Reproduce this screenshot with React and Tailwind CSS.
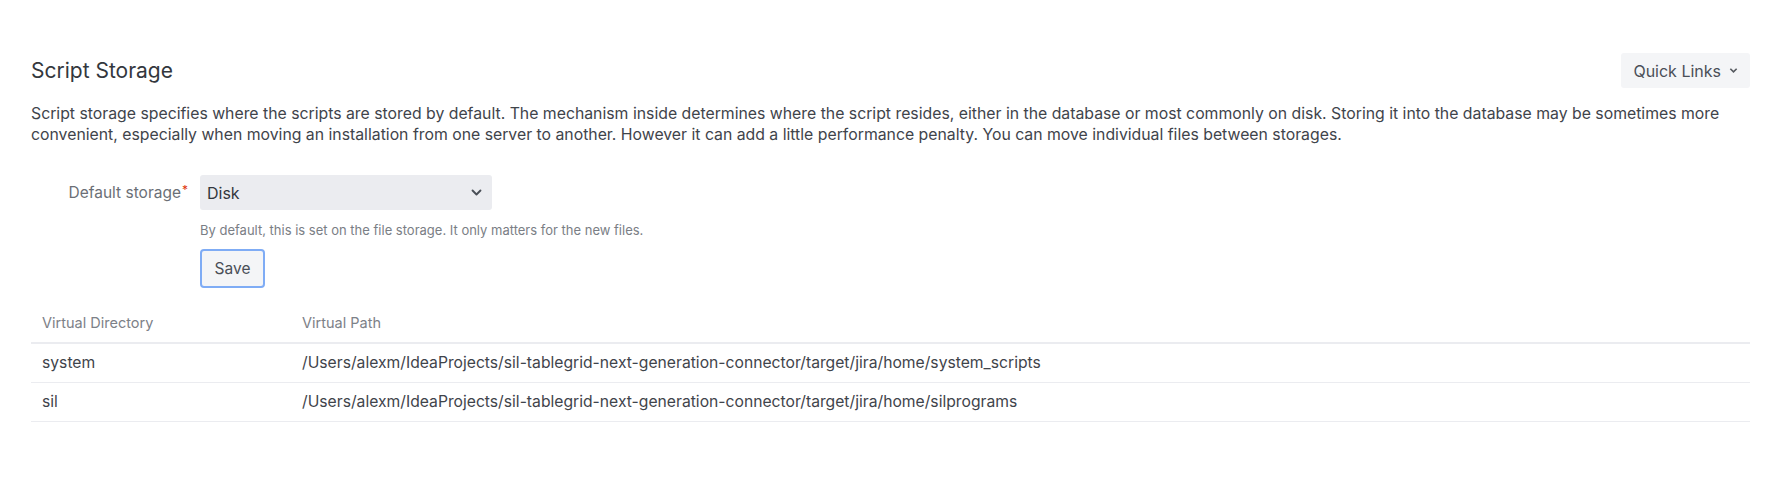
import React from "react";

const rows = [
  {
    dir: "system",
    path: "/Users/alexm/IdeaProjects/sil-tablegrid-next-generation-connector/target/jira/home/system_scripts",
  },
  {
    dir: "sil",
    path: "/Users/alexm/IdeaProjects/sil-tablegrid-next-generation-connector/target/jira/home/silprograms",
  },
];

const Chevron = ({ className }) => (
  <svg viewBox="0 0 24 24" className={className} fill="none">
    <path
      d="M7 9.5l5 5 5-5"
      stroke="currentColor"
      strokeWidth="2.4"
      strokeLinecap="round"
      strokeLinejoin="round"
    />
  </svg>
);

const App = () => {
  return (
    <div className="min-h-[478px] bg-white font-['Inter','Liberation_Sans',sans-serif] text-[#3a3f47] pt-[53px] pl-[31px] pr-[32px]">
      {/* header */}
      <div className="flex items-center justify-between h-[35px]">
        <h1 className="text-[21px] leading-none text-[#33373d]">Script Storage</h1>
        <button className="flex items-center h-[35px] pl-[12px] pr-[12px] bg-[#F4F5F7] rounded-[3px] text-[16px] text-[#4a4f57]">
          Quick Links
          <svg viewBox="0 0 10 10" className="w-[9px] h-[9px] ml-[8px]">
            <path d="M1.5 3l3.5 3.5L8.5 3" fill="none" stroke="#55595f" strokeWidth="1.8" />
          </svg>
        </button>
      </div>

      <p className="mt-[15px] text-[15.8px] leading-[21px] text-[#3f444b]">
        Script storage specifies where the scripts are stored by default. The mechanism inside
        determines where the script resides, either in the database or most commonly on disk.
        Storing it into the database may be sometimes more convenient, especially when moving an
        installation from one server to another. However it can add a little performance penalty.
        You can move individual files between storages.
      </p>

      {/* form */}
      <div className="mt-[30px] flex">
        <div className="w-[169px] shrink-0 pr-[12px] h-[35px] flex items-center justify-end text-[15.5px] text-[#6b6f76]">
          Default storage<span className="text-[#DE350B] text-[12px] self-start mt-[6px] ml-[1px]">*</span>
        </div>
        <div className="flex flex-col items-start">
          <div className="w-[292px] h-[35px] bg-[#EBECF0] rounded-[3px] flex items-center justify-between pl-[7px] pr-[6px] text-[16px] text-[#33373d]">
            <span>Disk</span>
            <Chevron className="w-[19px] h-[19px] text-[#4a4f57]" />
          </div>
          <div className="mt-[12px] text-[13px] leading-[16px] text-[#7a7e85]">
            By default, this is set on the file storage. It only matters for the new files.
          </div>
          <button className="mt-[11px] w-[65px] h-[39px] bg-[#F4F5F7] border-2 border-[#7FACF5] rounded-[4px] text-[15.5px] text-[#4a4f57]">
            Save
          </button>
        </div>
      </div>

      {/* table */}
      <table className="mt-[16px] w-full border-collapse text-left">
        <thead>
          <tr className="border-b-2 border-[#EBECF0]">
            <th className="h-[39px] w-[271px] pl-[11px] text-[14.5px] font-normal text-[#7d8188]">
              Virtual Directory
            </th>
            <th className="h-[39px] text-[14.5px] font-normal text-[#7d8188]">Virtual Path</th>
          </tr>
        </thead>
        <tbody>
          {rows.map((r) => (
            <tr key={r.dir} className="border-b border-[#EBECF0]">
              <td className="h-[39px] pl-[11px] text-[15.7px] text-[#3f444b]">{r.dir}</td>
              <td className="h-[39px] text-[15.7px] text-[#3f444b]">{r.path}</td>
            </tr>
          ))}
        </tbody>
      </table>
    </div>
  );
};

export default App;
